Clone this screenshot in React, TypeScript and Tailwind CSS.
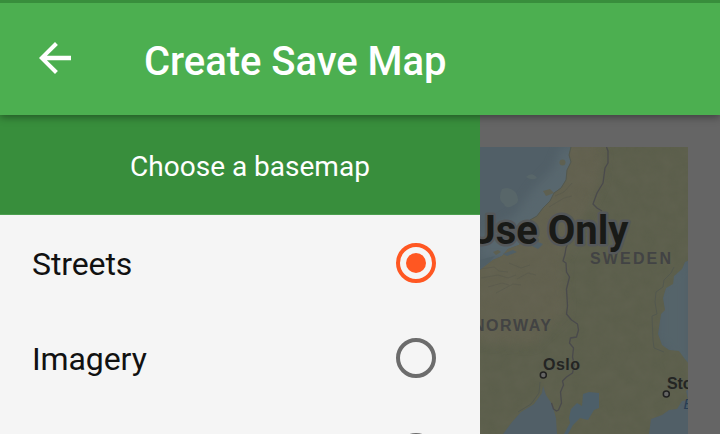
function BackArrow() {
  return (
    <svg viewBox="0 0 32 32" className="block h-8 w-8 shrink-0" fill="#fff">
      <path d="M32 13.800H7.900L18.900 2.900 16 0 0 16l16 16 2.900-2.900L7.900 18.200H32z" />
    </svg>
  );
}

function Radio({ checked = false }: { checked?: boolean }) {
  return (
    <span
      className={
        checked
          ? "flex size-10 shrink-0 items-center justify-center rounded-full border-4 border-[#ff5722]"
          : "flex size-10 shrink-0 items-center justify-center rounded-full border-4 border-[#6c6c6c]"
      }
    >
      {checked && <span className="size-5 rounded-full bg-[#ff5722]" />}
    </span>
  );
}

function Option({ label, checked }: { label?: string; checked?: boolean }) {
  return (
    <div className="flex h-[95px] w-full shrink-0 items-center justify-between pt-px pr-[44px] pl-8">
      <span className="pt-px text-[32px] leading-none tracking-[-0.1px] text-[#111]">{label}</span>
      <Radio checked={checked} />
    </div>
  );
}

function BaseMap() {
  return (
    <svg viewBox="480 147 208 287" className="block h-[287px] w-[208px] shrink-0">
      <defs>
        <filter id="terrain" x="0" y="0" width="100%" height="100%" colorInterpolationFilters="sRGB">
          <feTurbulence type="fractalNoise" baseFrequency="0.07" numOctaves="4" seed="8" />
          <feColorMatrix values="0 0 0 0 .43  0 0 0 0 .42  0 0 0 0 .36  1.6 0 0 0 -.4" />
        </filter>
        <filter id="soften" x="-20%" y="-20%" width="140%" height="140%" colorInterpolationFilters="sRGB">
          <feGaussianBlur stdDeviation="5" />
        </filter>
        <clipPath id="land">
          <path d="M571 147l-2 8 2 7-4 8-1 10-5 8-7 5-4 8-7 7-6 8-7 4-4 8-2 10-5 7-11 4-6 7-9 4-13 10V434h23l9-12 9-10 13-8 8-11 1-7 3 9 6 9 4 14 1 16h92l2-15 11-4 7-5 8-1 5-8 6-1-2-9 8-8 1-7-5-11-6-7-5-7-10-1-7-5-4-11 3-20 4-4-2-12 3-10 7-4 1-8 8-7 3-7 11-5V147z" />
        </clipPath>
      </defs>
      <rect x="480" y="147" width="208" height="287" fill="#515f67" />
      <path d="M562 147l-9 22-20 20-18 26-35 22v22h30l70-70V147z" fill="#58676e" filter="url(#soften)" />
      <path d="M688 255v145l-12-40-18-20V290z" fill="#55646a" filter="url(#soften)" />
      <g fill="#586669">
        <path d="M502 189q9-3 14 4 5 9-2 12-8 5-10-1-7-4-2-15zM526 177q6-6 11 1-5 3-11-1z" />
      </g>
      <g clipPath="url(#land)">
        <rect x="480" y="147" width="208" height="287" fill="#5c5f4c" />
        <path
          d="M565 140h39l-4 43-12 23-18 38-7 16 3 52-34 33-62-4v-76l46-51z"
          fill="#62614f"
          filter="url(#soften)"
        />
        <rect x="480" y="147" width="208" height="287" filter="url(#terrain)" opacity=".22" />
        <g fill="none" stroke="#51534a" strokeWidth=".7" opacity=".5">
          <path d="M480 269l14-2 5 4 9 1M481 278l17-3 10 3 8-3M488 287l14-4 7 2M496 293l17-9 8 1M509 263l12 5 9-3M517 279l11-6 8 2M555 196l9-4 8-9M549 207l15-9 8-2" />
        </g>
      </g>
      <g fill="#5e6051">
        <circle cx="562.500" cy="162.500" r="3" />
        <path d="M543 191l7-2 4 4-8 3zM493 252l5-2 3 2-5 3z" />
      </g>
      <g fill="#505f66">
        <path d="M525 244l8-4 10 4-5 5-6-3zM503 254l10-4 4 2-10 4z" />
        <path d="M583 394l6-2 10 1v15l-5 2-6 10-8-2-7 7-5 9h-4l6-11-1-5 2-9 6-6 5 3z" fill="#4d5f69" />
        <path d="M480 260l15-4-6 6-9 5z" />
      </g>
      <path
        d="M606.500 147l1.500 4v12l-3 5-2 15-6 10-4 11 4 4 5 3M569 240l-3 8-1 6-2 7 3 2 .5 9 3 5-3 12 1 17-1 8 5 6 6 4 1 6-2 7-6 1-1 5 4 5-1 9 2 8-2 8-6 4-4 4 1 4-3 7 1 11-3 7-2 1-3-2-2-6"
        fill="none"
        stroke="#4a4a4c"
        strokeWidth="1.300"
        strokeLinejoin="round"
      />
      <path
        d="M571 147l-2 8 2 7-4 8-1 10-5 8-7 5-4 8-7 7-6 8-7 4M674 267l-3 6-7 7-1 7-7 5-1 10 2 12-5 2 1 24 1 8 10 4M540 382l-1 11-8 11-13 8"
        fill="none"
        stroke="#53584f"
        strokeWidth="1"
      />
      <g fontFamily="'Liberation Sans', Arial, sans-serif" fontWeight="700">
        <text x="590" y="264" fontSize="16" textLength="81" fill="#424344">SWEDEN</text>
        <text x="473" y="331" fontSize="16" textLength="78" fill="#424343">NORWAY</text>
        <g fontSize="16" fill="#242523" stroke="#5b5e50" strokeWidth="1.500" paintOrder="stroke">
          <text x="543" y="369.500" textLength="37">Oslo</text>
          <text x="667" y="389" textLength="81">Stockholm</text>
        </g>
        <text x="683.500" y="409" fontSize="15" fontStyle="italic" fontWeight="400" fill="#293d53">Baltic</text>
      </g>
      <g fill="#656565" stroke="#202020" strokeWidth="1.500">
        <circle cx="543.300" cy="375" r="3" />
        <circle cx="666.300" cy="394" r="3" />
      </g>
      <text
        x="628.500"
        y="243.500"
        textAnchor="end"
        fontFamily="Roboto, sans-serif"
        fontSize="40"
        fontWeight="700"
        fill="#191a17"
        stroke="#55585a"
        strokeWidth="5"
        strokeLinejoin="round"
        paintOrder="stroke"
      >
        Use Only
      </text>
    </svg>
  );
}

export default function App() {
  return (
    <div className="flex h-[434px] w-[720px] flex-col overflow-hidden bg-[#656565] font-['Roboto',sans-serif]">
      <header className="relative z-10 flex h-[115px] shrink-0 items-center border-t-[3px] border-[#388e3c] bg-[#4caf50] pl-[39px] shadow-[0_2px_8px_rgba(0,0,0,0.4)]">
        <div className="pb-[2px]">
          <BackArrow />
        </div>
        <h1 className="ml-[73px] pt-[6px] text-[40px] leading-none font-medium tracking-[-0.04px] text-white">
          Create Save Map
        </h1>
      </header>
      <div className="flex min-h-0 flex-1">
        <aside className="flex w-[480px] shrink-0 flex-col overflow-hidden bg-[#f5f5f5]">
          <div className="flex h-[100px] shrink-0 items-center justify-center border-b border-[#4c9f50] bg-[#388e3c] pt-[4px] pl-5">
            <h2 className="text-[28px] leading-none text-white">Choose a basemap</h2>
          </div>
          <Option label="Streets" checked />
          <Option label="Imagery" />
          <Option />
        </aside>
        <main className="pt-8">
          <BaseMap />
        </main>
      </div>
    </div>
  );
}
